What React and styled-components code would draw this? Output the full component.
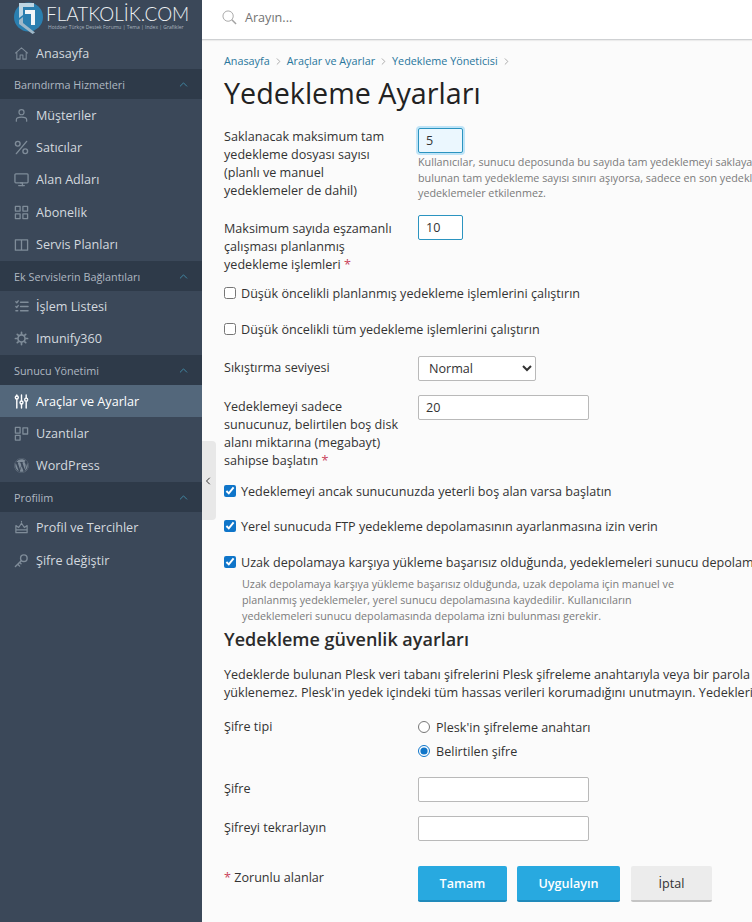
import React from 'react';
import styled, { createGlobalStyle } from 'styled-components';
import { ChevronUp, ChevronLeft, ChevronRight } from 'lucide-react';
import { FaWordpress } from 'react-icons/fa';

const GlobalStyle = createGlobalStyle`
  html, body {
    margin: 0;
    height: 100%;
    overflow: hidden;
    background: #fbfbfb;
  }
  body, input, select, button {
    font-family: "Open Sans", "Liberation Sans", sans-serif;
  }
`;

const Page = styled.div`
  display: flex;
  width: 752px;
  height: 922px;
  overflow: hidden;
  position: relative;
`;

const Sidebar = styled.nav`
  flex: 0 0 202px;
  width: 202px;
  min-width: 0;
  overflow: hidden;
  background: #3b4859;
  display: flex;
  flex-direction: column;
`;
const LogoBar = styled.div`
  height: 37px;
  flex: none;
  display: flex;
  align-items: flex-start;
  padding-left: 14px;
  gap: 2px;
`;
const LogoText = styled.div`
  display: flex;
  flex-direction: column;
  color: #eef2f5;
`;
const LogoName = styled.span`
  font-family: "Lato", sans-serif;
  font-size: 18.9px;
  font-weight: 300;
  line-height: 20px;
  margin-top: 4px;
  white-space: nowrap;
`;
const LogoTag = styled.span`
  font-size: 5px;
  line-height: 7px;
  color: #a9b4bf;
  white-space: nowrap;
  margin-left: 2px;
`;
const NavItem = styled.a`
  display: flex;
  align-items: center;
  flex: none;
  height: 32.25px;
  padding-left: 14px;
  gap: 7px;
  font-size: 12.6px;
  color: ${p => (p.$active ? '#fff' : '#d3d9df')};
  background: ${p => (p.$active ? '#53677b' : 'transparent')};
  svg {
    flex: 0 0 15px;
    color: ${p => (p.$active ? '#fff' : '#7f8c99')};
  }
`;
const NavGroup = styled.div`
  display: flex;
  flex: none;
  align-items: center;
  justify-content: space-between;
  box-sizing: border-box;
  height: 30px;
  padding: 1px 12px 0 14px;
  background: #2e3a49;
  color: #aeb8c2;
  font-size: 10.8px;
  svg {
    color: #4596b5;
  }
`;
const Handle = styled.div`
  position: absolute;
  left: 202px;
  top: 441px;
  width: 14px;
  height: 79px;
  background: #e8e8e8;
  border-radius: 0 4px 4px 0;
  display: flex;
  align-items: center;
  color: #333;
`;

const Main = styled.main`
  flex: 1;
  min-width: 0;
  display: flex;
  flex-direction: column;
`;
const TopBar = styled.header`
  box-sizing: border-box;
  height: 40px;
  flex: none;
  background: #fff;
  border-bottom: 1px solid #cfd1d3;
  box-shadow: 0 1px 1px rgba(0, 0, 0, 0.06);
  display: flex;
  align-items: center;
  padding: 0 0 4px 20px;
  gap: 8px;
  font-size: 12.6px;
  color: #737373;
`;
const Content = styled.div`
  padding: 13px 0 0 22px;
  width: 900px;
`;
const Crumbs = styled.div`
  display: flex;
  align-items: center;
  gap: 3px;
  font-size: 10.8px;
  line-height: 16px;
  color: #28769b;
  svg {
    color: #a5a5a5;
  }
`;
const Title = styled.h1`
  margin: 5px 0 16px;
  font-size: 28.7px;
  font-weight: 400;
  line-height: 38px;
  color: #222;
`;
const Row = styled.div`
  display: grid;
  grid-template-columns: 194px 1fr;
  margin-bottom: ${p => p.$after || 0}px;
`;
const Label = styled.div`
  font-size: 12.6px;
  line-height: 18px;
  color: #333;
  padding-top: ${p => p.$top || 0}px;
`;
const Star = styled.span`
  color: #c9435c;
`;
const Field = styled.div`
  display: flex;
  flex-direction: column;
  align-items: flex-start;
`;
const TextInput = styled.input`
  box-sizing: border-box;
  width: ${p => p.$w || 171}px;
  height: 25px;
  padding: 0 7px;
  font-size: 12.6px;
  color: #333;
  background: #fff;
  border: 1px solid ${p => (p.$accent ? '#2b94c0' : '#b9b9b9')};
  border-radius: 2px;
  outline: none;
`;
const FocusInput = styled(TextInput)`
  background: #ebf7fe;
  box-shadow: 0 0 0 2px #bfe4f7;
`;
const Hint = styled.div`
  font-size: 10.75px;
  line-height: 15.7px;
  color: #7a7a7a;
  white-space: nowrap;
  margin-top: ${p => p.$top || 0}px;
  padding-left: ${p => p.$left || 0}px;
`;
const SelectBox = styled.select`
  box-sizing: border-box;
  width: 118px;
  height: 25px;
  padding-left: 6px;
  font-size: 12.6px;
  color: #333;
  background: #fff;
  border: 1px solid #b9b9b9;
  border-radius: 2px;
`;
const CheckRow = styled.label`
  display: flex;
  align-items: center;
  gap: 5px;
  height: 18px;
  font-size: 12.6px;
  color: #333;
  white-space: nowrap;
  margin-bottom: ${p => p.$after || 0}px;
`;
const Check = styled.input`
  width: 12px;
  height: 12px;
  margin: 0;
  accent-color: #0f75c9;
`;
const SubTitle = styled.h2`
  margin: 2px 0 14px;
  font-size: 18px;
  font-weight: 600;
  line-height: 26px;
  color: #2b2b2b;
`;
const Para = styled.p`
  margin: 0 0 16px;
  font-size: 12.6px;
  line-height: 18px;
  color: #333;
  white-space: nowrap;
`;
const RadioRow = styled.label`
  display: flex;
  align-items: center;
  gap: 6px;
  height: 18px;
  font-size: 12.6px;
  color: #333;
  margin-bottom: ${p => p.$after || 0}px;
`;
const Radio = styled.input`
  width: 12px;
  height: 12px;
  margin: 0;
  accent-color: #0f75c9;
`;
const Actions = styled.div`
  display: flex;
  gap: 10px;
`;
const Btn = styled.button`
  box-sizing: border-box;
  height: 36px;
  width: ${p => p.$w}px;
  margin-right: ${p => p.$after || 0}px;
  border: 0;
  border-bottom: 2px solid ${p => (p.$primary ? '#1f8abb' : '#c4c4c4')};
  border-radius: 2px;
  font-size: 12.6px;
  font-weight: ${p => (p.$primary ? 600 : 400)};
  color: ${p => (p.$primary ? '#fff' : '#333')};
  background: ${p => (p.$primary ? '#28a9e0' : '#ececec')};
`;

const Svg = ({ children, fill = 'none', width = 1.2 }) => (
  <svg width="15" height="15" viewBox="0 0 16 16" fill={fill} stroke="currentColor" strokeWidth={width} strokeLinecap="round" strokeLinejoin="round">
    {children}
  </svg>
);

const icons = {
  home: <Svg width={1.1}><path d="M1.500 7.500 8 2l6.500 5.500M3 6.500V14h3.500v-4.500h3V14H13V6.500" /></Svg>,
  user: <Svg width={1.3}><circle cx="8" cy="4.500" r="2.700" /><path d="M2.500 14v-1.500C2.500 10.500 4 9.800 8 9.800s5.500.7 5.500 2.700V14" /></Svg>,
  percent: <Svg width={1.5}><path d="M13.500 1.500 2.500 14.500" /><circle cx="4" cy="4" r="2.500" /><circle cx="12" cy="12" r="2.500" /></Svg>,
  monitor: <Svg width={1.4}><rect x="1" y="2" width="14" height="9.500" rx="1" /><path d="M5 14.500h6" /><path d="M7 11.500h2v3" /></Svg>,
  grid: <Svg width={1.4}><rect x="1.500" y="1.500" width="5" height="5" /><rect x="9.500" y="1.500" width="5" height="5" /><rect x="1.500" y="9.500" width="5" height="5" /><rect x="9.500" y="9.500" width="5" height="5" /></Svg>,
  book: <Svg width={1.4}><path d="M8 3H1.500v11H8zM8 3h6.500v11H8z" /></Svg>,
  list: <Svg width={1.5}><path d="M7 3.500h8M7 8h8M7 12.500h8M2 3l1 1 1.500-2M2 8l1 1 1.500-2M2 12.500h2" /></Svg>,
  gear: <Svg width={1.8}><circle cx="8" cy="8" r="3.800" /><path d="M8 1.500v1.500M8 13v1.500M1.500 8H3M13 8h1.500M3.500 3.500l1 1M11.500 11.500l1 1M12.500 3.500l-1 1M4.500 11.500l-1 1" /></Svg>,
  sliders: <Svg width={1.5}><path d="M3 5.500V15M8 1v6M8 11v4M13 1v3M13 8v7M3 1v1" /><circle cx="3" cy="3.700" r="1.600" /><circle cx="8" cy="9" r="1.600" /><circle cx="13" cy="6" r="1.600" /></Svg>,
  blocks: <Svg width={1.4}><rect x="1.500" y="1.500" width="5" height="6" /><rect x="1.500" y="10" width="5" height="5" /><rect x="9.500" y="2" width="5" height="6.500" /></Svg>,
  wordpress: <FaWordpress size={15} />,
  crown: <Svg width={1.3}><path d="M2 13.500V6l3 2 3-4.500 3 4.500 3-2v7.500zM2 10.500h12M8 1.500v.5" /></Svg>,
  key: <Svg width={1.5}><circle cx="10.500" cy="5.500" r="3.500" /><path d="M8 8 1.500 14.500M4 12l2 2M6 10l1.500 1.500" /></Svg>,
};

const Item = ({ icon, children, ...rest }) => (
  <NavItem {...rest}>
    {icons[icon]}
    <span>{children}</span>
  </NavItem>
);

const Group = ({ children, ...rest }) => (
  <NavGroup {...rest}>
    <span>{children}</span>
    <ChevronUp size={13} strokeWidth={1.5} />
  </NavGroup>
);

const Logo = () => (
  <svg width="30" height="34" viewBox="0 0 30 34" style={{ flex: 'none' }}>
    <circle cx="14.500" cy="17" r="14.500" fill="#2a7fb0" />
    <path d="M5 3h15v4H9v8l-4 3z" fill="#bcd5e3" />
    <path d="M5 20l4-3v6l12 9.500-2.500 1.500L5 24z" fill="#9fb8c8" />
    <path d="M11 10h10V7l-1 0h-1v0h2v18h-4V14h-6z" fill="#f2f6f8" />
  </svg>
);

export default function App() {
  return (
    <Page>
      <GlobalStyle />
      <Sidebar>
        <LogoBar>
          <Logo />
          <LogoText>
            <LogoName>FLATKOLİK.COM</LogoName>
            <LogoTag>Hotdoer Türkçe Destek Forumu | Tema | Index | Grafikler</LogoTag>
          </LogoText>
        </LogoBar>
        <Item icon="home">Anasayfa</Item>
        <Group>Barındırma Hizmetleri</Group>
        <Item icon="user">Müşteriler</Item>
        <Item icon="percent">Satıcılar</Item>
        <Item icon="monitor">Alan Adları</Item>
        <Item icon="grid">Abonelik</Item>
        <Item icon="book">Servis Planları</Item>
        <Group>Ek Servislerin Bağlantıları</Group>
        <Item icon="list">İşlem Listesi</Item>
        <Item icon="gear">Imunify360</Item>
        <Group>Sunucu Yönetimi</Group>
        <Item icon="sliders" $active>Araçlar ve Ayarlar</Item>
        <Item icon="blocks">Uzantılar</Item>
        <Item icon="wordpress">WordPress</Item>
        <Group>Profilim</Group>
        <Item icon="crown">Profil ve Tercihler</Item>
        <Item icon="key">Şifre değiştir</Item>
      </Sidebar>
      <Handle>
        <ChevronLeft size={12} strokeWidth={2} />
      </Handle>
      <Main>
        <TopBar>
          <svg width="15" height="15" viewBox="0 0 16 16" fill="none" stroke="#a3a3a3" strokeWidth="1">
            <circle cx="6.500" cy="6.500" r="5.500" />
            <path d="m10.500 10.500 4.500 4.500" strokeWidth="1.600" />
          </svg>
          Arayın...
        </TopBar>
        <Content>
          <Crumbs>
            <span>Anasayfa</span>
            <ChevronRight size={11} />
            <span>Araçlar ve Ayarlar</span>
            <ChevronRight size={11} />
            <span>Yedekleme Yöneticisi</span>
            <ChevronRight size={11} />
          </Crumbs>
          <Title>Yedekleme Ayarları</Title>

          <Row $after={13}>
            <Label>
              Saklanacak maksimum tam<br />
              yedekleme dosyası sayısı<br />
              (planlı ve manuel<br />
              yedeklemeler de dahil)
            </Label>
            <Field>
              <FocusInput $w={45} $accent defaultValue="5" />
              <Hint $top={2}>
                Kullanıcılar, sunucu deposunda bu sayıda tam yedeklemeyi saklayabilir. Sunucu deposunda<br />
                bulunan tam yedekleme sayısı sınırı aşıyorsa, sadece en son yedeklemeler saklanır. Diğer<br />
                yedeklemeler etkilenmez.
              </Hint>
            </Field>
          </Row>

          <Row $after={10}>
            <Label $top={5}>
              Maksimum sayıda eşzamanlı<br />
              çalışması planlanmış<br />
              yedekleme işlemleri <Star>*</Star>
            </Label>
            <Field>
              <TextInput $w={45} $accent defaultValue="10" />
            </Field>
          </Row>

          <CheckRow $after={18}>
            <Check type="checkbox" />
            Düşük öncelikli planlanmış yedekleme işlemlerini çalıştırın
          </CheckRow>
          <CheckRow $after={18}>
            <Check type="checkbox" />
            Düşük öncelikli tüm yedekleme işlemlerini çalıştırın
          </CheckRow>

          <Row $after={14}>
            <Label $top={3}>Sıkıştırma seviyesi</Label>
            <Field>
              <SelectBox defaultValue="Normal">
                <option>Normal</option>
              </SelectBox>
            </Field>
          </Row>

          <Row $after={12}>
            <Label $top={3}>
              Yedeklemeyi sadece<br />
              sunucunuz, belirtilen boş disk<br />
              alanı miktarına (megabayt)<br />
              sahipse başlatın <Star>*</Star>
            </Label>
            <Field>
              <TextInput defaultValue="20" />
            </Field>
          </Row>

          <CheckRow $after={17}>
            <Check type="checkbox" defaultChecked />
            Yedeklemeyi ancak sunucunuzda yeterli boş alan varsa başlatın
          </CheckRow>
          <CheckRow $after={18}>
            <Check type="checkbox" defaultChecked />
            Yerel sunucuda FTP yedekleme depolamasının ayarlanmasına izin verin
          </CheckRow>
          <CheckRow>
            <Check type="checkbox" defaultChecked />
            Uzak depolamaya karşıya yükleme başarısız olduğunda, yedeklemeleri sunucu depolamasına kaydedin
          </CheckRow>
          <Hint $top={6} $left={18}>
            Uzak depolamaya karşıya yükleme başarısız olduğunda, uzak depolama için manuel ve<br />
            planlanmış yedeklemeler, yerel sunucu depolamasına kaydedilir. Kullanıcıların<br />
            yedeklemeleri sunucu depolamasında depolama izni bulunması gerekir.
          </Hint>

          <SubTitle>Yedekleme güvenlik ayarları</SubTitle>
          <Para>
            Yedeklerde bulunan Plesk veri tabanı şifrelerini Plesk şifreleme anahtarıyla veya bir parola ile şifreleyin.<br />
            yüklenemez. Plesk'in yedek içindeki tüm hassas verileri korumadığını unutmayın. Yedekleri güvenli yerde saklayın.
          </Para>

          <Row $after={17}>
            <Label>Şifre tipi</Label>
            <Field>
              <RadioRow $after={6}>
                <Radio type="radio" name="pw" />
                Plesk'in şifreleme anahtarı
              </RadioRow>
              <RadioRow>
                <Radio type="radio" name="pw" defaultChecked />
                Belirtilen şifre
              </RadioRow>
            </Field>
          </Row>

          <Row $after={14}>
            <Label $top={3}>Şifre</Label>
            <Field><TextInput /></Field>
          </Row>
          <Row $after={25}>
            <Label $top={3}>Şifreyi tekrarlayın</Label>
            <Field><TextInput /></Field>
          </Row>

          <Row>
            <Label $top={3}><Star>*</Star> Zorunlu alanlar</Label>
            <Actions>
              <Btn $primary $w={89}>Tamam</Btn>
              <Btn $primary $w={103} $after={1}>Uygulayın</Btn>
              <Btn $w={81}>İptal</Btn>
            </Actions>
          </Row>
        </Content>
      </Main>
    </Page>
  );
}
